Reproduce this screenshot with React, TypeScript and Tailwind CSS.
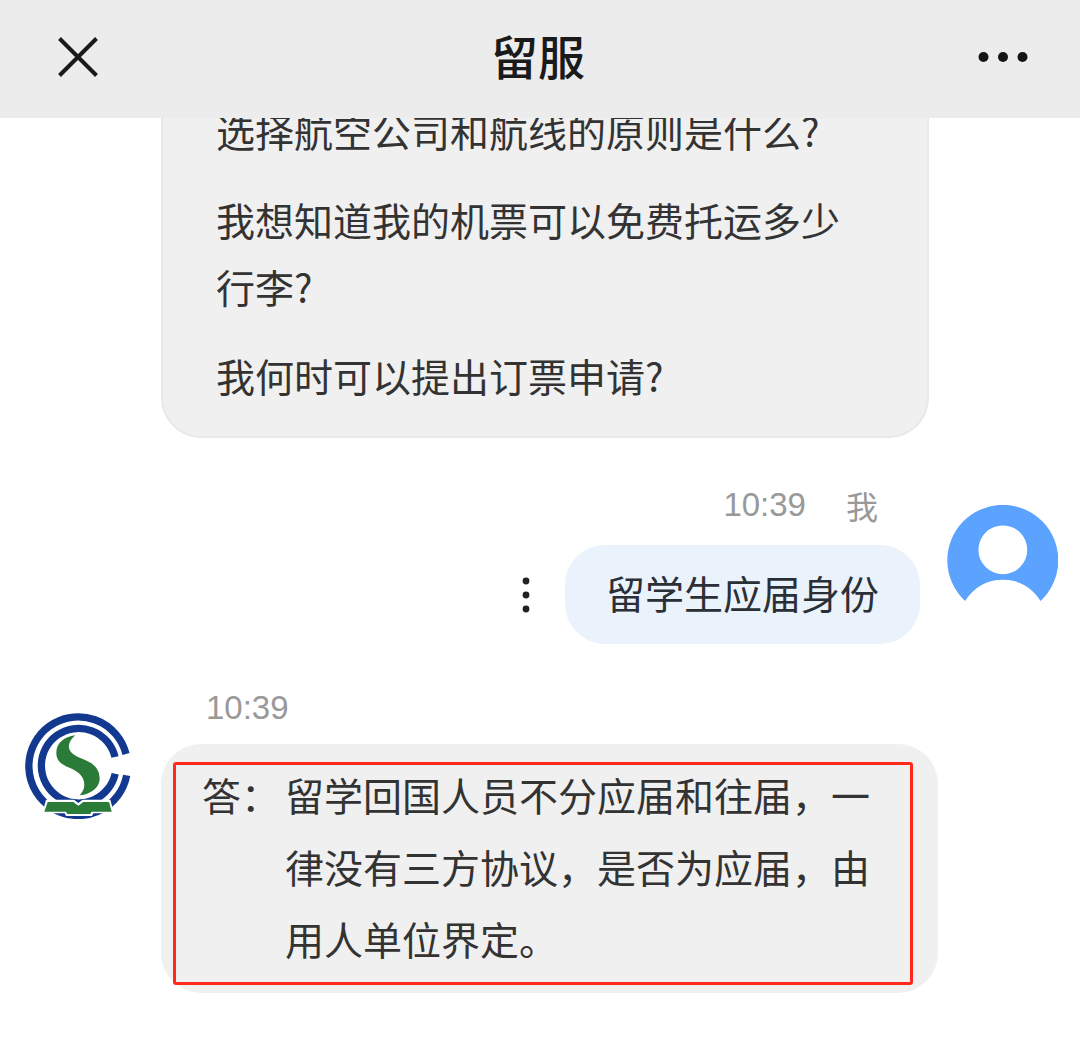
import React from 'react';

const questions = [
  '选择航空公司和航线的原则是什么?',
  '我想知道我的机票可以免费托运多少行李?',
  '我何时可以提出订票申请?',
];

function CloseIcon() {
  return (
    <svg className="w-10 h-10" viewBox="0 0 40 40" fill="none" stroke="#1a1a1a" strokeWidth="4">
      <path d="M1.5 1.5 38.5 38.5M38.5 1.5 1.5 38.5" />
    </svg>
  );
}

function MoreIcon() {
  return (
    <svg className="w-[50px] h-3" viewBox="0 0 50 12" fill="#151515">
      <circle cx="5.5" cy="6" r="5" />
      <circle cx="25" cy="6" r="5" />
      <circle cx="44.5" cy="6" r="5" />
    </svg>
  );
}

function UserAvatar() {
  return (
    <svg className="w-[111px] h-24 shrink-0" viewBox="52 46 332 287" role="img" aria-label="我">
      <path
        fill="#5ba3ff"
        fillRule="evenodd"
        d="M106 333A166 166 0 1 1 332 333A132 132 0 0 0 106 333ZM292 180A73 73 0 1 0 146 180A73 73 0 1 0 292 180Z"
      />
    </svg>
  );
}

function ServiceLogo() {
  return (
    <svg className="w-[106px] h-[107px] shrink-0" viewBox="45 36 318 321" role="img" aria-label="留服">
      <g fill="none" stroke="#12388f" strokeWidth="22">
        <path d="M348 162A148 148 0 1 0 350 226" />
        <path d="M315 171A112 112 0 1 0 315.5 221" />
      </g>
      <path
        fill="#2a7a38"
        d="M196 106C162 110 139 130 139 158C139 184 156 194 180 204C208 216 223 232 223 254C223 268 217 276 209 286C244 282 269 262 269 236C269 208 252 192 230 182C204 171 180 162 177 144C175 130 184 116 196 106Z"
      />
      <path fill="#fff" d="M108 299H192L205 309L218 299H301L312 340H250L246 348H168L164 340H97Z" />
      <path
        fill="#2a7a38"
        d="M113 306H190L205 317L220 306H297L305 335H245L241 342H172L168 335H103Z"
      />
    </svg>
  );
}

export default function App() {
  return (
    <div className="flex h-screen flex-col bg-white font-['Noto_Sans_CJK_SC',sans-serif] text-[#333]">
      <header className="flex h-[118px] shrink-0 items-center justify-between bg-[#ececec] pr-[52px] pl-[58px] pb-1">
        <button type="button" aria-label="关闭" className="flex w-10">
          <CloseIcon />
        </button>
        <h1 className="pb-1 text-[47px] leading-[60px] font-medium text-[#1a1a1a]">留服</h1>
        <button type="button" aria-label="更多" className="flex w-[50px]">
          <MoreIcon />
        </button>
      </header>

      <main className="flex min-h-0 flex-1 flex-col justify-end overflow-hidden pb-[46px]">
        <div className="mr-[151px] ml-[161px] rounded-b-[40px] border-2 border-t-0 border-[#e9e9e9] bg-[#f0f0f0] pr-20 pb-[27px] pl-[53px]">
          <ul className="flex flex-col gap-[22px] text-[39px] leading-[67px]">
            {questions.map((question) => (
              <li key={question}>{question}</li>
            ))}
          </ul>
        </div>

        <div className="mt-[42px] flex items-start justify-end gap-[27px] pr-[22px]">
          <div className="flex flex-col items-end gap-[15px]">
            <div className="flex items-center gap-10 pr-[42px] leading-[50px] text-[#999]">
              <time className="font-['Liberation_Sans',sans-serif] text-[33px]">10:39</time>
              <span className="text-[32px]">我</span>
            </div>
            <div className="flex items-center gap-[35px]">
              <button type="button" aria-label="消息操作">
                <svg className="w-2 h-9" viewBox="0 0 8 36" fill="#222">
                  <circle cx="4" cy="4" r="3.4" />
                  <circle cx="4" cy="18" r="3.4" />
                  <circle cx="4" cy="32" r="3.4" />
                </svg>
              </button>
              <p className="rounded-[40px] bg-[#eaf2fc] px-[41px] pt-3.5 pb-[18px] text-[39px] leading-[67px] text-[#2b2f36]">
                留学生应届身份
              </p>
            </div>
          </div>
          <div className="pt-[25px]">
            <UserAvatar />
          </div>
        </div>

        <div className="mt-[39px] flex items-start gap-[30px] pr-[142px] pl-[25px]">
          <div className="pt-[29px]">
            <ServiceLogo />
          </div>
          <div className="flex flex-1 flex-col gap-[11px]">
            <time className="pl-[45px] font-['Liberation_Sans',sans-serif] text-[33px] leading-[50px] text-[#999]">
              10:39
            </time>
            <div className="rounded-[40px] bg-[#f0f0f0] pt-[18px] pr-[25px] pb-2 pl-3">
              <div className="rounded-[3px] border-3 border-[#ff2a1c]">
                <dl className="-mt-[7px] flex gap-[5px] pr-9 pb-2 pl-[26px] text-[39px] leading-[72px]">
                  <dt className="shrink-0">答：</dt>
                  <dd>留学回国人员不分应届和往届，一律没有三方协议，是否为应届，由用人单位界定。</dd>
                </dl>
              </div>
            </div>
          </div>
        </div>
      </main>
    </div>
  );
}
